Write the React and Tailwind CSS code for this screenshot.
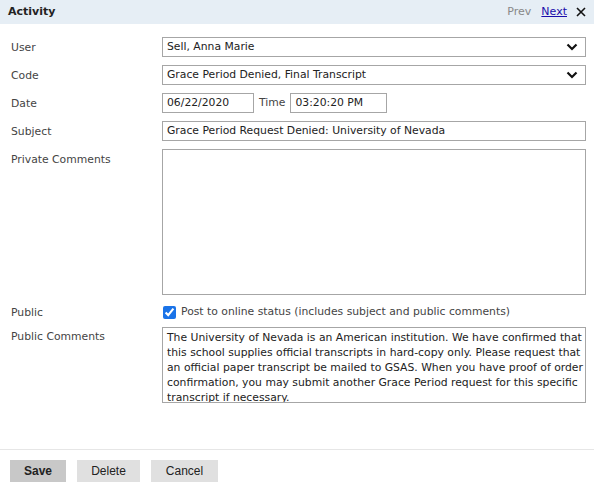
import { useState } from "react";

const fieldFont = { fontFamily: '"DejaVu Sans", Verdana, sans-serif' };

const publicLines = [
  "The University of Nevada is an American institution. We have confirmed that",
  "this school supplies official transcripts in hard-copy only. Please request that",
  "an official paper transcript be mailed to GSAS. When you have proof of order",
  "confirmation, you may submit another Grace Period request for this specific",
  "transcript if necessary.",
];

function Chevron() {
  return (
    <svg width="12" height="8" viewBox="0 0 12 8" className="shrink-0">
      <path d="M1.5 1.5 L6 6 L10.5 1.5" fill="none" stroke="#111" strokeWidth="2.2" />
    </svg>
  );
}

function SelectBox({ value }) {
  return (
    <div className="flex h-[20px] w-[424px] items-center justify-between border border-[#a6a6a6] bg-white pl-[4px] pr-[7px] text-[10.8px] text-[#222]">
      <span>{value}</span>
      <Chevron />
    </div>
  );
}

function TextBox({ value, width }) {
  return (
    <div
      className="flex h-[20px] items-center border border-[#a6a6a6] bg-white px-[4px] text-[10.8px] text-[#222]"
      style={{ width }}
    >
      {value}
    </div>
  );
}

function Row({ label, children, className = "" }) {
  return (
    <div className={`flex ${className}`}>
      <div className="h-[20px] w-[162px] shrink-0 pl-[11px] text-[10.8px] leading-[22px] text-[#444]">
        {label}
      </div>
      {children}
    </div>
  );
}

export default function App() {
  const [isPublic, setIsPublic] = useState(true);

  return (
    <div className="flex h-[483px] w-[594px] flex-col bg-white" style={fieldFont}>
      <div className="flex h-[24px] items-center justify-between bg-[#e6eef5] pl-[8px] pr-[8px]">
        <span className="text-[11px] font-bold text-[#222]">Activity</span>
        <div className="flex items-center text-[11px]">
          <span className="text-[#888]">Prev</span>
          <a href="#" className="ml-[10px] text-[#1a0dab] underline">
            Next
          </a>
          <svg width="10" height="10" viewBox="0 0 10 10" className="ml-[9px]">
            <path d="M1 1 L9 9 M9 1 L1 9" stroke="#111" strokeWidth="1.6" />
          </svg>
        </div>
      </div>

      <div className="flex flex-1 flex-col gap-[8px] pt-[13px]">
        <Row label="User">
          <SelectBox value="Sell, Anna Marie" />
        </Row>
        <Row label="Code">
          <SelectBox value="Grace Period Denied, Final Transcript" />
        </Row>
        <Row label="Date">
          <div className="flex items-center">
            <TextBox value="06/22/2020" width={92} />
            <span className="ml-[5px] mr-[5px] text-[10.8px] text-[#444]">Time</span>
            <TextBox value="03:20:20 PM" width={97} />
          </div>
        </Row>
        <Row label="Subject">
          <TextBox value="Grace Period Request Denied: University of Nevada" width={424} />
        </Row>
        <Row label="Private Comments">
          <div className="h-[146px] w-[424px] border border-[#a6a6a6] bg-white" />
        </Row>
        <Row label="Public" className="-mt-[1px]">
          <label className="flex h-[20px] items-center pt-[1px] text-[10.8px] text-[#444]">
            <input
              type="checkbox"
              checked={isPublic}
              onChange={(e) => setIsPublic(e.target.checked)}
              className="ml-[1px] mr-[5px] h-[13px] w-[13px] accent-[#1a73e8]"
            />
            Post to online status (includes subject and public comments)
          </label>
        </Row>
        <Row label="Public Comments" className="-mt-[4px]">
          <div className="mt-[1px] h-[76px] w-[424px] overflow-hidden border border-[#a6a6a6] bg-white px-[4px] pt-[2px] text-[10.8px] leading-[15px] text-[#222]">
            {publicLines.map((line) => (
              <div key={line} className="whitespace-nowrap">
                {line}
              </div>
            ))}
          </div>
        </Row>
      </div>

      <div className="flex h-[34px] items-start gap-[11px] border-t border-[#e6e6e6] pl-[10px] pt-[10px] font-['Liberation_Sans',Arial,sans-serif] text-[12px] text-[#222]">
        <button className="h-[22px] w-[56px] bg-[#c8c8c8] font-bold">Save</button>
        <button className="h-[22px] w-[63px] bg-[#e0e0e0]">Delete</button>
        <button className="h-[22px] w-[67px] bg-[#e0e0e0]">Cancel</button>
      </div>
    </div>
  );
}
